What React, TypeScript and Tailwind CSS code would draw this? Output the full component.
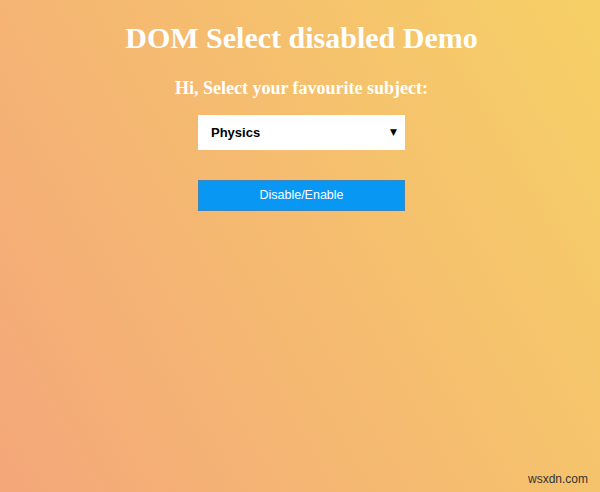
import React from "react";

export default function App() {
  return (
    <div className="relative w-[600px] h-[492px] overflow-hidden flex flex-col items-center pl-[3px] bg-[linear-gradient(60deg,#f4a77a,#f6d066)]">
      <h1 className="mt-[20px] text-[30px] leading-[36px] font-bold text-white font-['Liberation_Serif',serif]">
        DOM Select disabled Demo
      </h1>
      <p className="mt-[21px] text-[18px] leading-[22px] font-bold text-white font-['Liberation_Serif',serif]">
        Hi, Select your favourite subject:
      </p>
      <div className="relative mt-[16px] w-[207px] h-[35px]">
        <select
          defaultValue="Physics"
          className="appearance-none w-full h-full bg-white pl-[13px] pr-[20px] text-[13px] font-bold text-black outline-none border-0 font-['Liberation_Sans',Arial,sans-serif]"
        >
          <option>Physics</option>
          <option>Chemistry</option>
          <option>Maths</option>
          <option>Biology</option>
        </select>
        <span className="pointer-events-none absolute right-[8px] top-[11px] text-[9px] leading-[12px] text-black font-['DejaVu_Sans',sans-serif]">
          ▼
        </span>
      </div>
      <button className="mt-[30px] w-[207px] h-[31px] bg-[#0898f3] border border-[#3d87bd] text-white text-[12.5px] font-['Liberation_Sans',Arial,sans-serif]">
        Disable/Enable
      </button>
      <span className="absolute right-[12px] bottom-[6px] text-[12px] leading-[14px] text-[#333333] font-['Liberation_Sans',Arial,sans-serif]">
        wsxdn.com
      </span>
    </div>
  );
}
